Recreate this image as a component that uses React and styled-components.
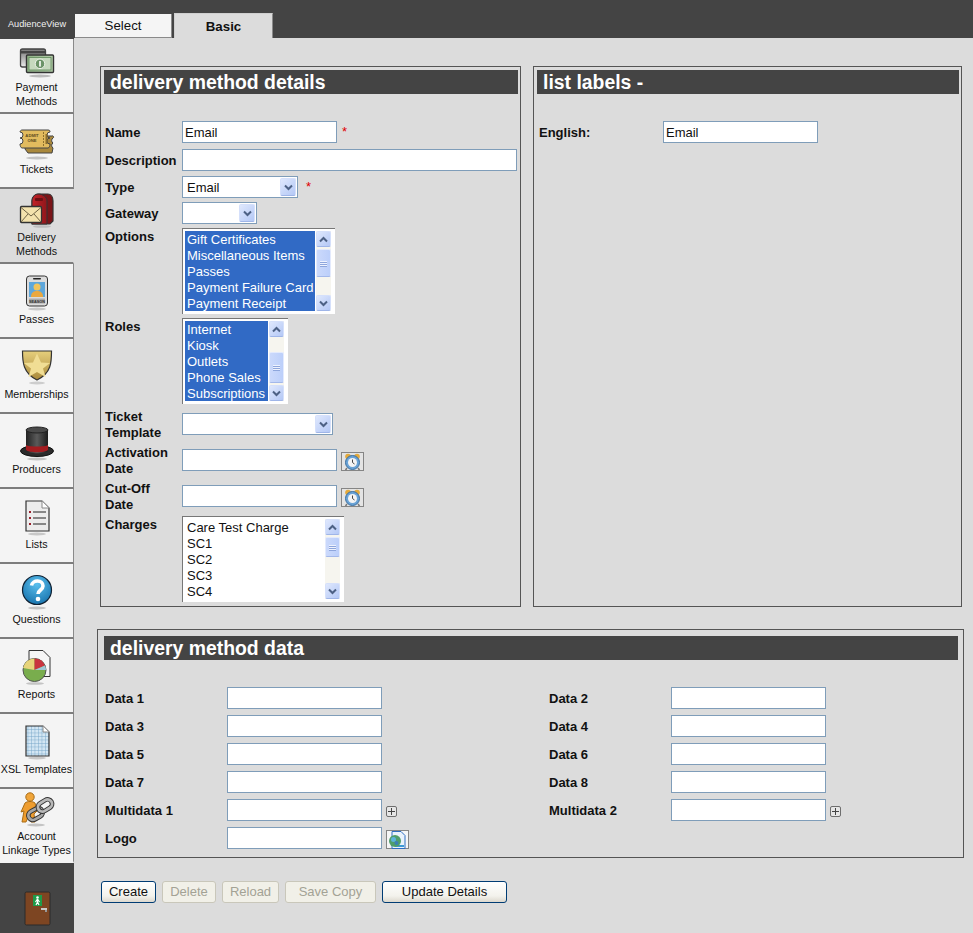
import styled, { createGlobalStyle } from "styled-components";

const GlobalStyle = createGlobalStyle`
  html, body {
    margin: 0;
    padding: 0;
    background: #dcdcdc;
    font-family: "Liberation Sans", Arial, sans-serif;
    color: #111;
  }
`;

const Page = styled.div`
  display: grid;
  grid-template-columns: 74px 1fr;
  height: 933px;
  overflow: hidden;
`;

const Sidebar = styled.nav`
  display: flex;
  flex-direction: column;
  background: #444;
`;

const Brand = styled.div`
  height: 39px;
  flex: none;
  box-sizing: border-box;
  padding-top: 19px;
  text-align: center;
  font-size: 9.2px;
  line-height: 11px;
  color: #f2f2f2;
`;

const NavItem = styled.a`
  height: ${({ $last }) => ($last ? "74px" : "75px")};
  flex: none;
  box-sizing: border-box;
  display: flex;
  flex-direction: column;
  align-items: center;
  justify-content: center;
  padding-bottom: 4px;
  background: ${({ $active }) => ($active ? "#dcdcdc" : "#f4f4f4")};
  border-right: 1px solid ${({ $active }) => ($active ? "#dcdcdc" : "#8a8a8a")};
  border-bottom: 2px solid ${({ $last }) => ($last ? "#f4f4f4" : "#7d7d7d")};
`;

const NavIcon = styled.svg`
  width: 40px;
  height: 40px;
  flex: none;
  display: block;
`;

const NavLabel = styled.span`
  font-size: 10.7px;
  line-height: 14px;
  text-align: center;
  white-space: nowrap;
`;

const ExitArea = styled.div`
  flex: 1;
  display: flex;
  justify-content: center;
  padding-top: 28px;
`;

const ExitIcon = styled.svg`
  width: 27px;
  height: 35px;
  display: block;
`;

const Main = styled.main`
  display: flex;
  flex-direction: column;
  min-width: 0;
`;

const TabBar = styled.div`
  height: 38px;
  flex: none;
  background: #444;
  display: flex;
  align-items: flex-end;
  gap: 2px;
  padding-left: 1px;
`;

const Tab = styled.div`
  box-sizing: border-box;
  text-align: center;
  height: ${({ $active }) => ($active ? "25px" : "24px")};
  width: ${({ $active }) => ($active ? "99px" : "97px")};
  background: ${({ $active }) => ($active ? "#dcdcdc" : "#f5f5f5")};
  border-top: ${({ $active }) => ($active ? "1px solid #cfcfcf" : "0")};
  border-left: ${({ $active }) => ($active ? "1px solid #cfcfcf" : "0")};
  border-right: 1px solid #8a8a8a;
  border-bottom: ${({ $active }) => ($active ? "0" : "1px solid #8a8a8a")};
  font-size: 13.3px;
  font-weight: ${({ $active }) => ($active ? "700" : "400")};
  line-height: ${({ $active }) => ($active ? "25px" : "23px")};
`;

const Content = styled.div`
  padding: 28px 9px 0 23px;
`;

const TopPanels = styled.div`
  display: flex;
  gap: 12px;
  margin-left: 3px;
`;

const Panel = styled.section`
  box-sizing: border-box;
  height: 541px;
  width: ${({ $wide }) => ($wide ? "429px" : "421px")};
  border: 1px solid #555;
  padding: 3px 2px 0 3px;
`;

const DataPanel = styled.section`
  box-sizing: border-box;
  height: 229px;
  margin-top: 22px;
  border: 1px solid #555;
  padding: 6px 5px 0 6px;
`;

const Heading = styled.h2`
  margin: 0;
  height: 24px;
  background: #444;
  color: #fff;
  font-size: 19.4px;
  font-weight: 700;
  line-height: 24px;
  padding-left: 6px;
`;

const FormStack = styled.div`
  display: flex;
  flex-direction: column;
  gap: 4px;
  margin-top: 27px;
  padding-left: ${({ $inset }) => $inset || "1px"};
`;

const Row = styled.div`
  display: grid;
  grid-template-columns: ${({ $labelWidth }) => $labelWidth || "77px"} 1fr;
  align-items: ${({ $top }) => ($top ? "start" : "center")};
  margin-bottom: ${({ $extra }) => $extra || 0};
`;

const Label = styled.label`
  font-size: 13px;
  font-weight: 700;
  line-height: 16px;
  margin: 1px 0 -1px;
`;

const Field = styled.div`
  display: flex;
  align-items: center;
`;

const TextInput = styled.input`
  box-sizing: border-box;
  width: ${({ $w }) => $w || "155px"};
  height: 22px;
  border: 1px solid #7f9db9;
  background: #fff;
  padding: 0 2px;
  margin: 0;
  font: 13px "Liberation Sans", Arial, sans-serif;
  color: #111;
  outline: none;
`;

const Required = styled.span`
  color: #e00000;
  font-size: 13px;
  line-height: 13px;
  margin-left: ${({ $gap }) => $gap || "5px"};
  margin-top: -1px;
`;

const Select = styled.div`
  box-sizing: border-box;
  width: ${({ $w }) => $w};
  height: 22px;
  border: 1px solid #7f9db9;
  background: #fff;
  display: flex;
  justify-content: space-between;
  padding: 1px;
  font-size: 13px;
  line-height: 20px;
`;

const SelectValue = styled.span`
  padding-left: 3px;
`;

const ArrowButton = styled.span`
  width: ${({ $w }) => $w || "16px"};
  height: ${({ $h }) => $h || "18px"};
  flex: none;
  box-sizing: border-box;
  display: flex;
  align-items: center;
  justify-content: center;
  background: linear-gradient(135deg, #dfe8fd, #b4c8f6);
  border: 1px solid #d5e0fb;
  border-bottom-color: #9fb5e8;
  border-radius: 2px;
`;

const Chevron = styled.svg`
  width: 9px;
  height: 7px;
  display: block;
  transform: ${({ $up }) => ($up ? "rotate(180deg)" : "none")};
`;

const ListBox = styled.div`
  box-sizing: border-box;
  width: ${({ $w }) => $w};
  height: 86px;
  display: flex;
  justify-content: space-between;
  background: #fff;
  border-top: 1px solid #777;
  border-left: 1px solid #777;
  padding: 2px 4px 3px 2px;
`;

const Options = styled.div`
  flex: 1;
  min-width: 0;
  box-sizing: border-box;
  background: ${({ $selected }) => ($selected ? "#316ac5" : "#fff")};
  color: ${({ $selected }) => ($selected ? "#fff" : "#111")};
  font-size: 13px;
  line-height: 16px;
  padding: 1px 0 0 2px;
  white-space: nowrap;
  overflow: hidden;
  margin-right: 1px;
`;

const ScrollTrack = styled.div`
  width: 15px;
  flex: none;
  display: flex;
  flex-direction: column;
  background: #f6f5ef;
`;

const ScrollGap = styled.div`
  flex: ${({ $fill }) => ($fill ? 1 : "none")};
  height: ${({ $h }) => ($h ? `${$h}px` : "auto")};
`;

const Thumb = styled.div`
  box-sizing: border-box;
  height: ${({ $h }) => $h}px;
  flex: none;
  display: flex;
  flex-direction: column;
  justify-content: center;
  align-items: center;
  gap: 1px;
  background: linear-gradient(90deg, #cbd9fb, #bccffa);
  border: 1px solid #e3eafd;
  border-bottom-color: #a3b8ea;
  border-radius: 2px;
`;

const GripLine = styled.span`
  width: 7px;
  height: 1px;
  background: #eef2fe;
  box-shadow: 0 1px 0 #8ea6dc;
`;

const Picker = styled.button`
  box-sizing: border-box;
  width: 23px;
  height: 19px;
  margin: 3px 0 0 4px;
  padding: 0;
  display: flex;
  align-items: center;
  justify-content: center;
  border: 1px solid #858585;
  background: ${({ $light }) => ($light ? "#f6f6f6" : "#e4e4e4")};
`;

const PlusBox = styled.span`
  box-sizing: border-box;
  position: relative;
  width: 11px;
  height: 11px;
  margin: 2px 0 0 4px;
  border: 1px solid #6e6e6e;
  border-radius: 2px;
  background: #e6e6e6;
  &::before {
    content: "";
    position: absolute;
    left: 1px;
    right: 1px;
    top: 4px;
    height: 1px;
    background: #444;
  }
  &::after {
    content: "";
    position: absolute;
    top: 1px;
    bottom: 1px;
    left: 4px;
    width: 1px;
    background: #444;
  }
`;

const DataGrid = styled.div`
  display: grid;
  grid-template-columns: 444px 1fr;
  row-gap: 6px;
  margin-top: 27px;
  padding-left: 1px;
`;

const Buttons = styled.div`
  display: flex;
  gap: 6px;
  margin: 23px 0 0 4px;
`;

const Button = styled.button`
  box-sizing: border-box;
  width: ${({ $w }) => $w};
  height: 22px;
  padding: 0 0 2px;
  font: 13px "Liberation Sans", Arial, sans-serif;
  border-radius: 3px;
  color: #111;
  border: 1px solid #003c74;
  background: linear-gradient(#ffffff, #f3f2ec 70%, #dcd8ce);
  &:disabled {
    color: #a3a295;
    border-color: #c9c7ba;
    background: #f1f0e8;
  }
`;

const TinyText = styled.text`
  font-family: "Liberation Sans", Arial, sans-serif;
  font-weight: 700;
  text-anchor: middle;
`;

function Payment() {
  return (
    <NavIcon viewBox="0 0 40 40">
      <defs>
        <linearGradient id="cardG" x1="0" y1="0" x2="0" y2="1">
          <stop offset="0" stopColor="#777" />
          <stop offset="1" stopColor="#ececec" />
        </linearGradient>
        <linearGradient id="noteG" x1="0" y1="0" x2="1" y2="0">
          <stop offset="0" stopColor="#8fb186" />
          <stop offset="1" stopColor="#b2cba8" />
        </linearGradient>
      </defs>
      <ellipse cx="23" cy="36" rx="11" ry="1.500" fill="#bbb" />
      <rect x="3.500" y="9" width="25" height="18" rx="2" fill="url(#cardG)" stroke="#444" strokeWidth="1.300" />
      <rect x="4" y="11" width="24" height="2.500" fill="#444" />
      <rect x="9.500" y="15" width="27" height="17.500" rx="1" fill="url(#noteG)" stroke="#333" strokeWidth="1.400" />
      <rect x="12" y="17.500" width="22" height="12.500" fill="#c6d9be" stroke="#5f8a5a" strokeWidth=".8" />
      <circle cx="23" cy="23.800" r="4.800" fill="#6c9468" stroke="#eef3ea" />
      <rect x="22.200" y="21" width="1.600" height="5.600" fill="#fff" />
    </NavIcon>
  );
}

function Tickets() {
  return (
    <NavIcon viewBox="0 0 40 40">
      <ellipse cx="20" cy="36" rx="11" ry="1.500" fill="#c4c4c4" />
      <path d="M8 14h27a1 1 0 0 1 1 2 3 3 0 0 0 0 5 3 3 0 0 0 0 5l-1 5H11l-3-4z" fill="#a9883c" stroke="#444" />
      <path d="M5 8h26c2 0 2 1 2 2a3 3 0 0 0 0 6 3 3 0 0 0 0 6c0 2-1 4-2 4H5c-1 0-2-2-2-4a3 3 0 0 0 0-6 3 3 0 0 0 0-6c0-1 1-2 2-2z" fill="#e2bb5e" stroke="#444" />
      <path d="M26.500 10v14" stroke="#8c6f2c" strokeDasharray="2 1" />
      <TinyText x="15" y="15" fontSize="4.200" fill="#5d4a1c">ADMIT</TinyText>
      <TinyText x="15" y="20" fontSize="4.200" fill="#5d4a1c">ONE</TinyText>
      <rect x="28.500" y="12" width="2" height="10" fill="#8c6f2c" />
    </NavIcon>
  );
}

function Delivery() {
  return (
    <NavIcon viewBox="0 0 40 40">
      <defs>
        <linearGradient id="boxG" x1="0" y1="0" x2="1" y2="0">
          <stop offset="0" stopColor="#c32227" />
          <stop offset="1" stopColor="#8f161b" />
        </linearGradient>
      </defs>
      <ellipse cx="25" cy="36.500" rx="9" ry="1.300" fill="#bdbdbd" />
      <path d="M15 34V11c0-4 3-7 7-7h9c3 0 5 3 5 7v20l-3 3z" fill="#7a1418" stroke="#333" strokeWidth="1.200" />
      <path d="M15 34V11c0-4 3-7 6-7 5 0 9 3 9 7v23z" fill="url(#boxG)" stroke="#333" />
      <rect x="18" y="8" width="8" height="3" rx="1" fill="#6a1014" />
      <rect x="3.500" y="16.500" width="21" height="16" rx="1" fill="#f3e2ad" stroke="#333" strokeWidth="1.300" />
      <path d="M4 17.500l10 8.500 10-8.500M4 32l7-8M24 32l-7-8" fill="none" stroke="#6f6345" />
    </NavIcon>
  );
}

function Passes() {
  return (
    <NavIcon viewBox="0 0 40 40">
      <ellipse cx="20" cy="37" rx="9" ry="1.500" fill="#c8c8c8" />
      <rect x="9.500" y="4" width="21" height="30" rx="3" fill="#dcdcdc" stroke="#333" />
      <rect x="16" y="6" width="8" height="1.500" rx=".7" fill="#222" />
      <rect x="12" y="10" width="16" height="15" fill="#5ea7db" />
      <circle cx="20" cy="15" r="3.500" fill="#f2c45a" />
      <path d="M14 25c0-5 3-6 6-6s6 1 6 6z" fill="#eaa83f" />
      <rect x="12" y="26.500" width="16" height="5" fill="#aaa" />
      <TinyText x="20" y="30.500" fontSize="3.800" fill="#333">SEASON</TinyText>
    </NavIcon>
  );
}

function Memberships() {
  return (
    <NavIcon viewBox="0 0 40 40">
      <defs>
        <linearGradient id="shieldG" x1="0" y1="0" x2="0" y2="1">
          <stop offset="0" stopColor="#e6cf7c" />
          <stop offset="1" stopColor="#a8883a" />
        </linearGradient>
      </defs>
      <ellipse cx="20" cy="36" rx="8" ry="1.500" fill="#cdcdcd" />
      <path d="M5.500 4h29c0 11 0 22-14.500 29C6 26 5.500 15 5.500 4z" fill="url(#shieldG)" stroke="#333" strokeWidth="1.200" />
      <path d="M20 6.500l4 9 9 .5-7 5.500 2.500 8.500-8.500-5-8.500 5 2.500-8.500-7-5.500 9-.5z" fill="#f0dd94" />
    </NavIcon>
  );
}

function Producers() {
  return (
    <NavIcon viewBox="0 0 40 40">
      <defs>
        <linearGradient id="hatG" x1="0" y1="0" x2="1" y2="0">
          <stop offset="0" stopColor="#222" />
          <stop offset=".5" stopColor="#5a5a5a" />
          <stop offset="1" stopColor="#1c1c1c" />
        </linearGradient>
      </defs>
      <ellipse cx="20" cy="37" rx="10" ry="1.500" fill="#c4c4c4" />
      <ellipse cx="20" cy="29" rx="16.500" ry="5.500" fill="#2b2b2b" stroke="#111" />
      <path d="M9 8v21c2 3 20 3 22 0V8z" fill="url(#hatG)" />
      <ellipse cx="20" cy="8" rx="11" ry="3" fill="#4a4a4a" stroke="#222" />
      <path d="M9 23c3 2 19 2 22 0v5c-3 3-19 3-22 0z" fill="#a31c20" />
    </NavIcon>
  );
}

function Lists() {
  return (
    <NavIcon viewBox="0 0 40 40">
      <ellipse cx="20" cy="37" rx="9" ry="1.500" fill="#c8c8c8" />
      <path d="M9 4h16l7 7v23H9z" fill="#ececec" stroke="#333" strokeWidth="1.200" />
      <path d="M25 4v7h7" fill="#fff" stroke="#888" />
      <g fill="#9a1f2b">
        <rect x="12" y="14" width="2" height="2" />
        <rect x="12" y="20" width="2" height="2" />
        <rect x="12" y="26" width="2" height="2" />
      </g>
      <path d="M16 15h13M16 21h13M16 27h13" stroke="#666" strokeWidth="1.300" />
    </NavIcon>
  );
}

function Questions() {
  return (
    <NavIcon viewBox="0 0 40 40">
      <defs>
        <radialGradient id="qG" cx=".5" cy=".3" r=".8">
          <stop offset="0" stopColor="#5cc0ee" />
          <stop offset="1" stopColor="#0f6aa6" />
        </radialGradient>
      </defs>
      <ellipse cx="20" cy="36" rx="9" ry="1.500" fill="#c4c4c4" />
      <circle cx="20" cy="18" r="14.500" fill="url(#qG)" stroke="#123" strokeWidth="1.200" />
      <path d="M14.500 13.500c1-6 11.500-6 11.500 .5 0 4-5 4-5 8" fill="none" stroke="#fff" strokeWidth="3.600" />
      <circle cx="21" cy="27" r="2.300" fill="#fff" />
    </NavIcon>
  );
}

function Reports() {
  return (
    <NavIcon viewBox="0 0 40 40">
      <ellipse cx="18" cy="36.500" rx="9" ry="1.300" fill="#c4c4c4" />
      <path d="M12 3.500h14l7 7v19H12z" fill="#f6f6f6" stroke="#333" />
      <circle cx="17.500" cy="23" r="11.500" fill="#79ad4d" stroke="#555" />
      <path d="M17.500 23L6 21A11.500 11.500 0 0 1 17.500 11.500z" fill="#e7d47a" />
      <path d="M17.500 23V11.500a11.500 11.500 0 0 1 10.500 7z" fill="#c9343f" />
      <path d="M17.500 23l10.500-4.500a11.500 11.500 0 0 1 1 4.500z" fill="#9fc6d4" />
    </NavIcon>
  );
}

function Templates() {
  return (
    <NavIcon viewBox="0 0 40 40">
      <defs>
        <pattern id="xslGrid" width="3.500" height="3.500" patternUnits="userSpaceOnUse">
          <rect width="3.500" height="3.500" fill="#d3e6f3" />
          <path d="M0 0h3.500M0 0v3.500" stroke="#6d9fc2" strokeWidth=".8" />
        </pattern>
      </defs>
      <ellipse cx="20" cy="36" rx="9" ry="1.500" fill="#c8c8c8" />
      <path d="M9 4h17l6 6v24H9z" fill="url(#xslGrid)" stroke="#333" strokeWidth="1.200" />
      <path d="M26 4v6h6" fill="#fff" stroke="#888" />
    </NavIcon>
  );
}

function Linkage() {
  return (
    <NavIcon viewBox="0 0 40 40">
      <ellipse cx="19" cy="36" rx="9" ry="1.500" fill="#c4c4c4" />
      <circle cx="13" cy="8" r="4.200" fill="#f0a53a" stroke="#a86c17" />
      <path d="M8 14c2-2 8-2 10 0l2 8-3 3 1 8h-4l-2-7-3 7H5l2-11-3 1z" fill="#ee9d30" stroke="#a86c17" />
      <g fill="none">
        <rect x="11" y="20.500" width="15" height="9" rx="4.500" transform="rotate(-28 18.500 25)" stroke="#333" strokeWidth="4.600" />
        <rect x="11" y="20.500" width="15" height="9" rx="4.500" transform="rotate(-28 18.500 25)" stroke="#a6a6a6" strokeWidth="2.800" />
        <rect x="20.500" y="12" width="15" height="9" rx="4.500" transform="rotate(-32 28 16.500)" stroke="#333" strokeWidth="4.600" />
        <rect x="20.500" y="12" width="15" height="9" rx="4.500" transform="rotate(-32 28 16.500)" stroke="#b8b8b8" strokeWidth="2.800" />
      </g>
    </NavIcon>
  );
}

const NAV = [
  { icon: Payment, lines: ["Payment", "Methods"] },
  { icon: Tickets, lines: ["Tickets"] },
  { icon: Delivery, lines: ["Delivery", "Methods"], active: true },
  { icon: Passes, lines: ["Passes"] },
  { icon: Memberships, lines: ["Memberships"] },
  { icon: Producers, lines: ["Producers"] },
  { icon: Lists, lines: ["Lists"] },
  { icon: Questions, lines: ["Questions"] },
  { icon: Reports, lines: ["Reports"] },
  { icon: Templates, lines: ["XSL Templates"] },
  { icon: Linkage, lines: ["Account", "Linkage Types"] },
];

function ChevronIcon({ up }) {
  return (
    <Chevron viewBox="0 0 9 7" $up={up}>
      <path d="M1 1.500l3.500 3.500L8 1.500" fill="none" stroke="#4d6185" strokeWidth="2" />
    </Chevron>
  );
}

function Dropdown({ w, value }) {
  return (
    <Select $w={w}>
      <SelectValue>{value}</SelectValue>
      <ArrowButton>
        <ChevronIcon />
      </ArrowButton>
    </Select>
  );
}

function Scrollbar({ before, thumb }) {
  return (
    <ScrollTrack>
      <ArrowButton $w="15px" $h="16px">
        <ChevronIcon up />
      </ArrowButton>
      <ScrollGap $h={before} />
      <Thumb $h={thumb}>
        <GripLine />
        <GripLine />
        <GripLine />
      </Thumb>
      <ScrollGap $fill />
      <ArrowButton $w="15px" $h="16px">
        <ChevronIcon />
      </ArrowButton>
    </ScrollTrack>
  );
}

function List({ w, items, selected, before, thumb }) {
  return (
    <ListBox $w={w}>
      <Options $selected={selected}>
        {items.map((item) => (
          <div key={item}>{item}</div>
        ))}
      </Options>
      <Scrollbar before={before} thumb={thumb} />
    </ListBox>
  );
}

function ClockPicker() {
  return (
    <Picker>
      <svg width="19" height="18" viewBox="0 0 19 18">
        <circle cx="5" cy="3.500" r="2.800" fill="#e3a93b" />
        <circle cx="14" cy="3.500" r="2.800" fill="#e3a93b" />
        <path d="M4 15l-1.500 2M15 15l1.500 2" stroke="#777" strokeWidth="1.500" />
        <circle cx="9.500" cy="9.500" r="7" fill="#6aa3d6" stroke="#3b6fa0" />
        <circle cx="9.500" cy="9.500" r="4.500" fill="#f4f4f4" />
        <path d="M9.500 6.500v3l2 1.500" fill="none" stroke="#444" />
      </svg>
    </Picker>
  );
}

function FilePicker() {
  return (
    <Picker $light>
      <svg width="19" height="18" viewBox="0 0 19 18">
        <path d="M4 .5h9l4 4v13H4z" fill="#eaf2fb" stroke="#2f6fc2" />
        <path d="M7 15h9" stroke="#3d9ad6" strokeWidth="2" />
        <circle cx="7" cy="10" r="6" fill="#4f9e6a" />
        <circle cx="5.500" cy="8.500" r="2.500" fill="#5bb4dc" />
        <circle cx="8.500" cy="12" r="2" fill="#3a7fb5" />
      </svg>
    </Picker>
  );
}

const DATA_ROWS = [
  "Data 1",
  "Data 2",
  "Data 3",
  "Data 4",
  "Data 5",
  "Data 6",
  "Data 7",
  "Data 8",
  "Multidata 1",
  "Multidata 2",
];

export default function App() {
  return (
    <>
      <GlobalStyle />
      <Page>
        <Sidebar>
          <Brand>AudienceView</Brand>
          {NAV.map(({ icon: Icon, lines, active }, i) => (
            <NavItem key={lines[0]} $active={active} $last={i === NAV.length - 1}>
              <Icon />
              {lines.map((line) => (
                <NavLabel key={line}>{line}</NavLabel>
              ))}
            </NavItem>
          ))}
          <ExitArea>
            <ExitIcon viewBox="0 0 27 35">
              <rect x="1" y="1" width="25" height="33" rx="1.500" fill="#7d4522" stroke="#2a2a2a" />
              <rect x="9" y="4" width="9" height="11" fill="#1f9a4a" />
              <circle cx="13.500" cy="6.500" r="1.300" fill="#fff" />
              <path d="M13.500 8l-2 3M13.500 8l2 3M13.500 8v3l-1.500 3M13.500 11l1.500 3" fill="none" stroke="#fff" strokeWidth="1.200" />
              <rect x="17" y="17" width="6" height="2" fill="#c9c9c9" />
              <rect x="21" y="19" width="2" height="2" fill="#999" />
            </ExitIcon>
          </ExitArea>
        </Sidebar>
        <Main>
          <TabBar>
            <Tab>Select</Tab>
            <Tab $active>Basic</Tab>
          </TabBar>
          <Content>
            <TopPanels>
              <Panel>
                <Heading>delivery method details</Heading>
                <FormStack>
                  <Row $extra="2px">
                    <Label>Name</Label>
                    <Field>
                      <TextInput defaultValue="Email" />
                      <Required>*</Required>
                    </Field>
                  </Row>
                  <Row $extra="1px">
                    <Label>Description</Label>
                    <Field>
                      <TextInput $w="335px" />
                    </Field>
                  </Row>
                  <Row>
                    <Label>Type</Label>
                    <Field>
                      <Dropdown w="116px" value="Email" />
                      <Required $gap="8px">*</Required>
                    </Field>
                  </Row>
                  <Row>
                    <Label>Gateway</Label>
                    <Field>
                      <Dropdown w="75px" value="" />
                    </Field>
                  </Row>
                  <Row $top>
                    <Label>Options</Label>
                    <List
                      w="153px"
                      selected
                      before={2}
                      thumb={28}
                      items={[
                        "Gift Certificates",
                        "Miscellaneous Items",
                        "Passes",
                        "Payment Failure Card",
                        "Payment Receipt",
                      ]}
                    />
                  </Row>
                  <Row $top>
                    <Label>Roles</Label>
                    <List
                      w="106px"
                      selected
                      before={15}
                      thumb={31}
                      items={["Internet", "Kiosk", "Outlets", "Phone Sales", "Subscriptions"]}
                    />
                  </Row>
                  <Row>
                    <Label>
                      Ticket
                      <br />
                      Template
                    </Label>
                    <Field>
                      <Dropdown w="151px" value="" />
                    </Field>
                  </Row>
                  <Row>
                    <Label>
                      Activation
                      <br />
                      Date
                    </Label>
                    <Field>
                      <TextInput />
                      <ClockPicker />
                    </Field>
                  </Row>
                  <Row>
                    <Label>
                      Cut-Off
                      <br />
                      Date
                    </Label>
                    <Field>
                      <TextInput />
                      <ClockPicker />
                    </Field>
                  </Row>
                  <Row $top>
                    <Label>Charges</Label>
                    <List
                      w="162px"
                      before={2}
                      thumb={20}
                      items={["Care Test Charge", "SC1", "SC2", "SC3", "SC4"]}
                    />
                  </Row>
                </FormStack>
              </Panel>
              <Panel $wide>
                <Heading>list labels -</Heading>
                <FormStack $inset="2px">
                  <Row $labelWidth="124px">
                    <Label>English:</Label>
                    <Field>
                      <TextInput defaultValue="Email" />
                    </Field>
                  </Row>
                </FormStack>
              </Panel>
            </TopPanels>
            <DataPanel>
              <Heading>delivery method data</Heading>
              <DataGrid>
                {DATA_ROWS.map((name) => (
                  <Row key={name} $labelWidth="122px">
                    <Label>{name}</Label>
                    <Field>
                      <TextInput />
                      {name.startsWith("Multi") && <PlusBox />}
                    </Field>
                  </Row>
                ))}
                <Row $labelWidth="122px">
                  <Label>Logo</Label>
                  <Field>
                    <TextInput />
                    <FilePicker />
                  </Field>
                </Row>
              </DataGrid>
            </DataPanel>
            <Buttons>
              <Button $w="55px">Create</Button>
              <Button $w="54px" disabled>Delete</Button>
              <Button $w="57px" disabled>Reload</Button>
              <Button $w="91px" disabled>Save Copy</Button>
              <Button $w="125px">Update Details</Button>
            </Buttons>
          </Content>
        </Main>
      </Page>
    </>
  );
}
